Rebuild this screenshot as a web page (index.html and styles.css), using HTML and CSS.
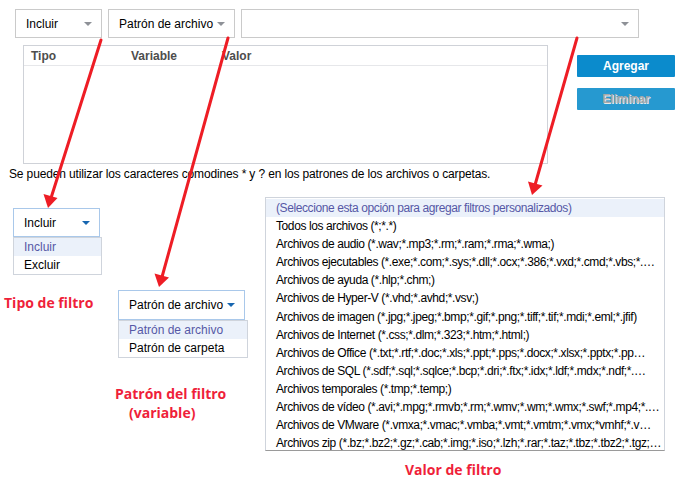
FILE: index.html
```html
<!DOCTYPE html>
<html lang="es">
<head>
<meta charset="utf-8">
<title>Filtros</title>
<link rel="stylesheet" href="styles.css">
</head>
<body>
<div class="page">
  <div class="toprow">
    <div class="sel sel-type"><span>Incluir</span><i class="caret"></i></div>
    <div class="sel sel-var"><span>Patrón de archivo</span><i class="caret"></i></div>
    <div class="sel sel-val"><span></span><i class="caret"></i></div>
  </div>
  <div class="midrow">
    <div class="table">
      <div class="thead">
        <span class="c1">Tipo</span><span class="c2">Variable</span><span class="c3">Valor</span>
      </div>
    </div>
    <div class="buttons">
      <button class="btn">Agregar</button>
      <button class="btn btn-dis">Eliminar</button>
    </div>
  </div>
  <p class="hint">Se pueden utilizar los caracteres comodines * y ? en los patrones de los archivos o carpetas.</p>
  <div class="demo">
    <div class="col col-a">
      <div class="sel open sel-type"><span>Incluir</span><i class="caret blue"></i></div>
      <ul class="list list-a">
        <li class="hl">Incluir</li>
        <li>Excluir</li>
      </ul>
      <div class="label label-a">Tipo de filtro</div>
    </div>
    <div class="col col-b">
      <div class="sel open sel-var sel-b"><span>Patrón de archivo</span><i class="caret blue"></i></div>
      <ul class="list list-b">
        <li class="hl">Patrón de archivo</li>
        <li>Patrón de carpeta</li>
      </ul>
      <div class="label label-b">Patrón del filtro<br><span class="sub">(variable)</span></div>
    </div>
    <div class="col col-c">
      <ul class="list list-c">
        <li class="hl">(Seleccione esta opción para agregar filtros personalizados)</li>
        <li>Todos los archivos (*;*.*)</li>
        <li>Archivos de audio (*.wav;*.mp3;*.rm;*.ram;*.rma;*.wma;)</li>
        <li>Archivos ejecutables (*.exe;*.com;*.sys;*.dll;*.ocx;*.386;*.vxd;*.cmd;*.vbs;*.…</li>
        <li>Archivos de ayuda (*.hlp;*.chm;)</li>
        <li>Archivos de Hyper-V (*.vhd;*.avhd;*.vsv;)</li>
        <li>Archivos de imagen (*.jpg;*.jpeg;*.bmp;*.gif;*.png;*.tiff;*.tif;*.mdi;*.eml;*.jfif)</li>
        <li>Archivos de Internet (*.css;*.dlm;*.323;*.htm;*.html;)</li>
        <li>Archivos de Office (*.txt;*.rtf;*.doc;*.xls;*.ppt;*.pps;*.docx;*.xlsx;*.pptx;*.pp…</li>
        <li>Archivos de SQL (*.sdf;*.sql;*.sqlce;*.bcp;*.dri;*.ftx;*.idx;*.ldf;*.mdx;*.ndf;*.…</li>
        <li>Archivos temporales (*.tmp;*.temp;)</li>
        <li>Archivos de vídeo (*.avi;*.mpg;*.rmvb;*.rm;*.wmv;*.wm;*.wmx;*.swf;*.mp4;*.…</li>
        <li>Archivos de VMware (*.vmxa;*.vmac;*.vmba;*.vmt;*.vmtm;*.vmx;*vmhf;*.v…</li>
        <li>Archivos zip (*.bz;*.bz2;*.gz;*.cab;*.img;*.iso;*.lzh;*.rar;*.taz;*.tbz;*.tbz2;*.tgz;…</li>
      </ul>
      <div class="label label-c">Valor de filtro</div>
    </div>
  </div>
  <svg class="arrows" width="685" height="491" viewBox="0 0 685 491">
    <g stroke="#ee1d25" stroke-width="3" stroke-linecap="round" fill="none">
      <line x1="101" y1="40" x2="51" y2="198"/>
      <line x1="228" y1="38" x2="162" y2="277"/>
      <line x1="577" y1="38" x2="535" y2="185"/>
    </g>
    <g fill="#ee1d25">
      <polygon points="48,208 57.5,198 43.5,194"/>
      <polygon points="159,287 169,277.5 154.5,273.5"/>
      <polygon points="532,195 542.5,185.5 528,181.5"/>
    </g>
  </svg>
</div>
</body>
</html>
```

FILE: styles.css
```css
* { box-sizing: border-box; }
html, body { margin: 0; padding: 0; background: #fff; }
.page {
  position: relative;
  width: 685px;
  height: 491px;
  overflow: hidden;
  font-family: "Liberation Sans", Arial, sans-serif;
  font-size: 12px;
  color: #000;
}
.toprow {
  display: flex;
  gap: 6px;
  padding: 9px 0 0 15px;
}
.sel {
  display: flex;
  align-items: center;
  justify-content: space-between;
  height: 29px;
  border: 1px solid #cacaca;
  background: #fff;
  padding: 0 9px 0 10px;
}
.sel-type { width: 87px; }
.sel-var { width: 127px; }
.sel-val { width: 398px; }
.caret {
  width: 0;
  height: 0;
  border-left: 4px solid transparent;
  border-right: 4px solid transparent;
  border-top: 4px solid #8e9197;
}
.caret.blue { border-top-color: #1766b0; }
.midrow {
  display: flex;
  padding: 7px 0 0 23px;
}
.table {
  width: 525px;
  height: 119px;
  border: 1px solid #cfd2d8;
}
.thead {
  display: flex;
  height: 20px;
  align-items: center;
  border-bottom: 1px solid #e6e7ea;
  font-weight: bold;
  color: #4d4d4d;
}
.thead .c1 { margin-left: 7px; width: 100px; }
.thead .c2 { width: 91px; }
.buttons {
  display: flex;
  flex-direction: column;
  gap: 11px;
  margin: 10px 0 0 29px;
}
.btn {
  width: 98px;
  height: 22px;
  border: none;
  border-radius: 1px;
  background: #0b8bcc;
  color: #fff;
  font-family: "Liberation Sans", Arial, sans-serif;
  font-size: 12px;
  font-weight: bold;
  padding: 0;
}
.btn-dis {
  background: #2699d0;
  color: #a9a9a9;
  text-shadow: 1px 1px 0 #e8e8e8;
}
.hint {
  margin: 3px 0 0 9px;
  height: 14px;
  line-height: 14px;
  letter-spacing: -0.14px;
  white-space: nowrap;
}
.demo {
  display: flex;
  align-items: flex-start;
}
.col { display: flex; flex-direction: column; }
.col-a { margin: 27px 0 0 13px; width: 89px; }
.col-b { margin: 109px 0 0 16px; width: 130px; }
.col-c { margin: 16px 0 0 17px; width: 400px; }
.sel.open { border-color: #a9c8ea; }
.sel-b { height: 30px; }
.list {
  list-style: none;
  margin: 0;
  padding: 0;
  border: 1px solid #cfd4dc;
  background: #fff;
}
.list li {
  height: 18px;
  line-height: 18px;
  padding-left: 10px;
  white-space: nowrap;
  overflow: hidden;
}
.list li.hl {
  background: #ebf1fa;
  color: #5658a6;
}
.list-a { width: 89px; }
.list-b { width: 130px; }
.list-c {
  height: 254px;
  border-color: #cfd4dc #cfd4dc #9a9a9a #cfd4dc;
  padding-top: 1px;
}
.list-c li {
  padding-left: 10px;
  padding-right: 0;
  height: 18.1px;
  line-height: 18px;
  letter-spacing: -0.4px;
}
.label {
  font-family: "Open Sans", "Liberation Sans", sans-serif;
  font-weight: bold;
  font-size: 14px;
  color: #ef1f3a;
  line-height: 19px;
  white-space: nowrap;
}
.label-a { margin: 18px 0 0 -9px; }
.label-b { margin: 26px 0 0 -3px; }
.label-b .sub { margin-left: 14px; }
.label-c { margin: 9px 0 0 140px; }
.arrows {
  position: absolute;
  left: 0;
  top: 0;
  pointer-events: none;
}
```
